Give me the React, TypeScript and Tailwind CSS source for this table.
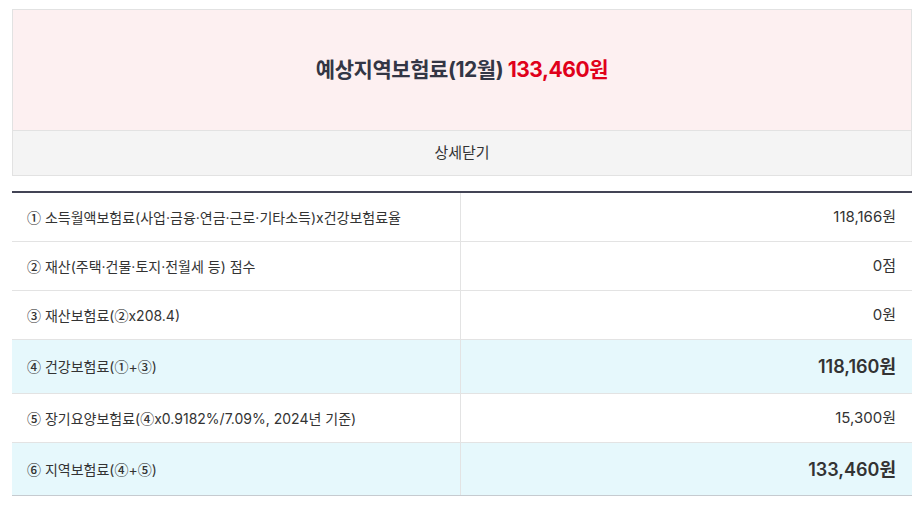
const font = "font-['Inter','Noto_Sans_CJK_KR',sans-serif]";

type Row = { num: string; label: string; value: string; strong?: boolean };

const rows: Row[] = [
  { num: "①", label: "소득월액보험료(사업·금융·연금·근로·기타소득)x건강보험료율", value: "118,166원" },
  { num: "②", label: "재산(주택·건물·토지·전월세 등) 점수", value: "0점" },
  { num: "③", label: "재산보험료(②x208.4)", value: "0원" },
  { num: "④", label: "건강보험료(①+③)", value: "118,160원", strong: true },
  { num: "⑤", label: "장기요양보험료(④x0.9182%/7.09%, 2024년 기준)", value: "15,300원" },
  { num: "⑥", label: "지역보험료(④+⑤)", value: "133,460원", strong: true },
];

const circled = /([①-⑳])/;

// circled digits come out huge in the fallback font, so pin them to Noto CJK
function Label({ text }: { text: string }) {
  return (
    <>
      {text.split(circled).map((part, i) =>
        circled.test(part) ? (
          <span key={i} className="font-['Noto_Sans_CJK_KR',sans-serif] font-medium">
            {part}
          </span>
        ) : (
          <span key={i}>{part}</span>
        ),
      )}
    </>
  );
}

export default function App() {
  return (
    <div className={`w-[916px] h-[508px] bg-white pl-3 pr-1 pt-[9px] text-[#333] ${font}`}>
      <div className="border border-[#e2e2e2]">
        <div className="h-[120px] bg-[#fdf0f1] flex items-center justify-center">
          <h2 className="text-[21px] font-bold tracking-[-0.45px] text-[#333645]">
            예상지역보험료(12월) <span className="text-[#e0001a]">133,460원</span>
          </h2>
        </div>
        <button
          type="button"
          className="w-full h-[45px] bg-[#f4f4f4] border-t border-[#e2e2e2] text-[15px] text-[#333]"
        >
          상세닫기
        </button>
      </div>

      <div className="mt-[15px] border-t-2 border-[#434455] border-b border-b-[#c6cbd0]">
        {rows.map((r, i) => {
          const last = i === rows.length - 1;
          const h = last ? "h-[52px]" : r.strong ? "h-[54px]" : "h-[49px]";
          return (
            <div
              key={i}
              className={`flex ${h} ${r.strong ? "bg-[#e6f8fc]" : ""} ${last ? "" : "border-b border-[#e3e3e3]"}`}
            >
              <div className="w-[449px] shrink-0 border-r border-[#e3e3e3] pl-[15px] flex items-center text-[14px] text-[#333] whitespace-pre">
                <Label text={`${r.num} ${r.label}`} />
              </div>
              <div
                className={`flex-1 pr-[16px] flex items-center justify-end ${r.strong ? "text-[18px] font-semibold text-[#333]" : "text-[15px] text-[#333]"}`}
              >
                {r.value}
              </div>
            </div>
          );
        })}
      </div>
    </div>
  );
}
